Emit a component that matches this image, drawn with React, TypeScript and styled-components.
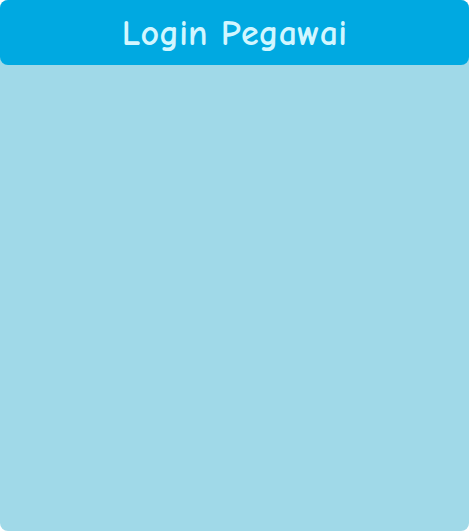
import React from "react";
import styled, { createGlobalStyle } from "styled-components";

const Global = createGlobalStyle`
  html, body { margin: 0; padding: 0; background: #ffffff; }
  body { font-family: "Comic Sans MS", "Comic Neue", "Open Sans", sans-serif; }
`;

const Card = styled.div`
  width: 469px;
  height: 531px;
  background: #a0d9e8;
  border-radius: 8px;
  display: flex;
  flex-direction: column;
`;

const Header = styled.div`
  height: 65px;
  background: #00a9e1;
  border-radius: 8px;
  display: flex;
  align-items: center;
  justify-content: center;
`;

const Title = styled.h1`
  margin: 0;
  padding-top: 2px;
  font-family: "Comic Sans MS", "Comic Neue", "Open Sans", sans-serif;
  font-weight: 700;
  font-size: 36px;
  color: #d2f6ff;
  letter-spacing: 0.2px;
`;

export default function App() {
  return (
    <>
      <Global />
      <Card>
        <Header>
          <Title>Login Pegawai</Title>
        </Header>
      </Card>
    </>
  );
}
